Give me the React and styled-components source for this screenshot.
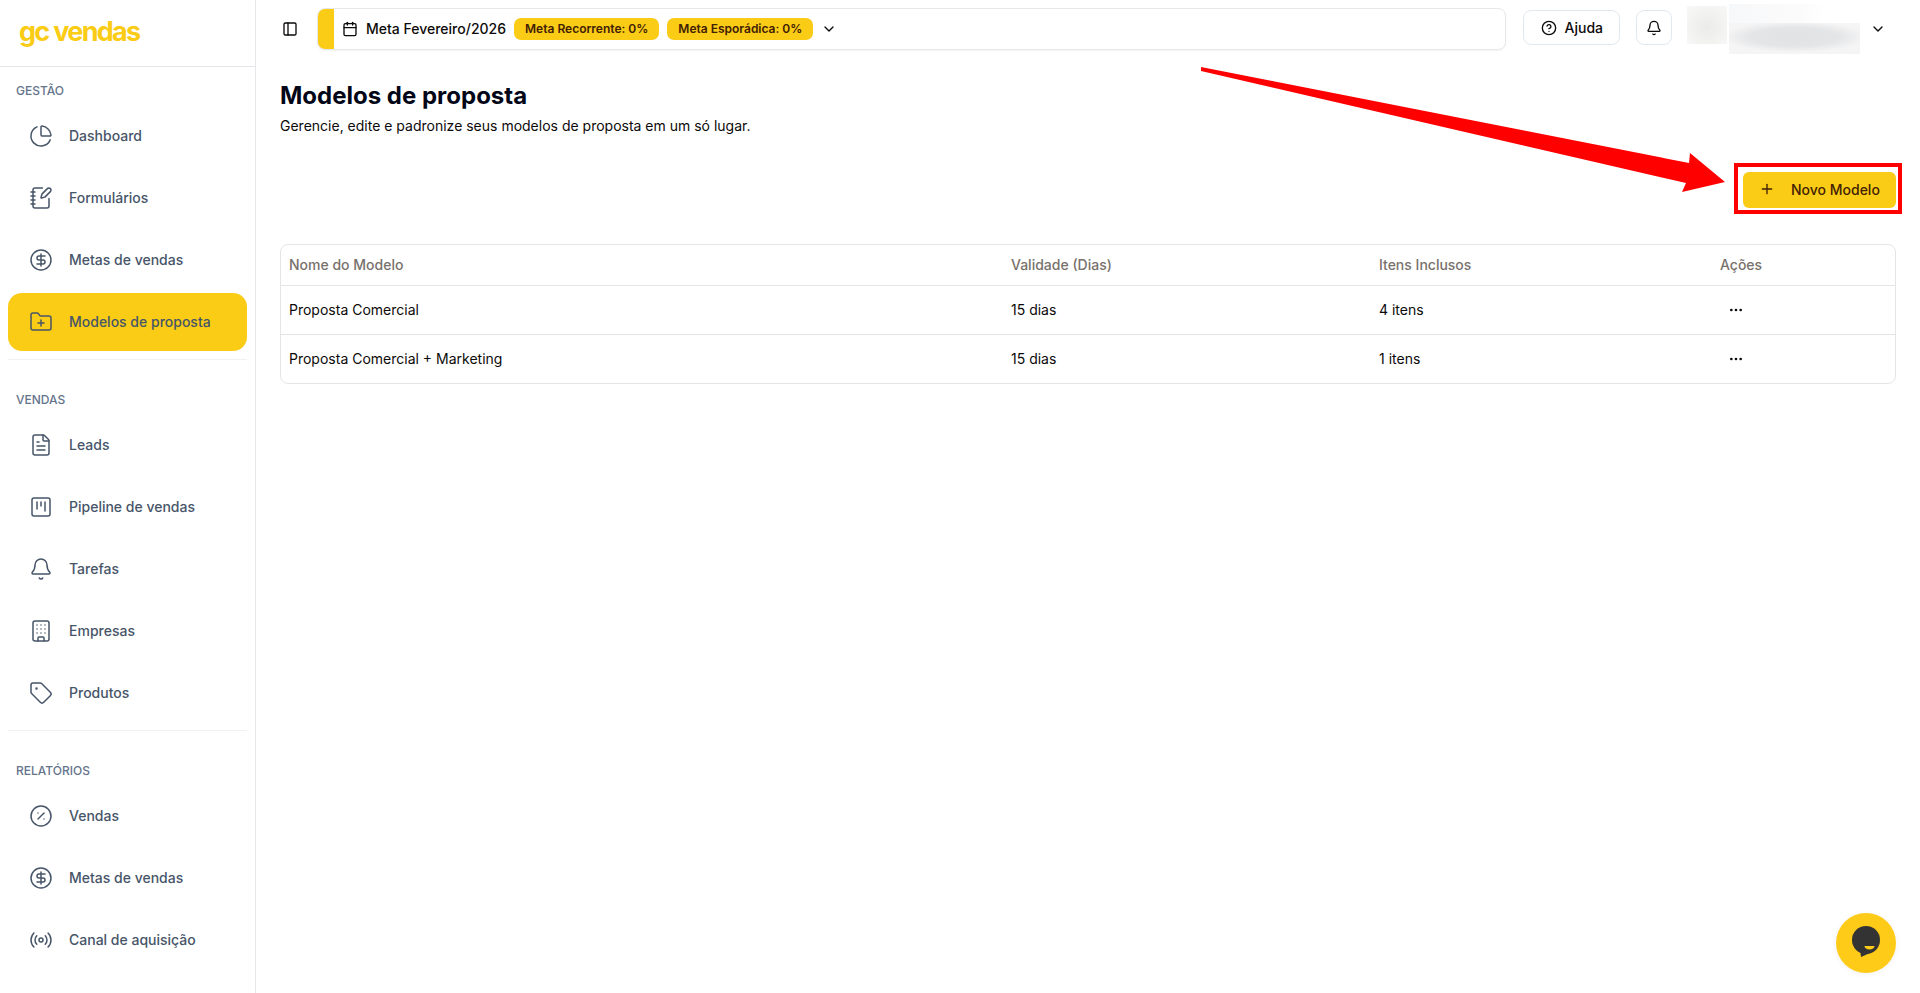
import styled, { createGlobalStyle } from 'styled-components';
import {
  Bell,
  Building,
  Calendar,
  ChartPie,
  ChevronDown,
  CircleDollarSign,
  CircleHelp,
  CirclePercent,
  Ellipsis,
  FileText,
  FolderPlus,
  NotebookPen,
  PanelLeft,
  Plus,
  Radio,
  SquareKanban,
  Tag,
} from 'lucide-react';

const GlobalStyle = createGlobalStyle`
  html, body {
    margin: 0;
    height: 100%;
    background: #fff;
    overflow: hidden;
  }
  body {
    font-family: Inter, "Liberation Sans", sans-serif;
    color: #0c0a09;
  }
`;

const Layout = styled.div`
  display: flex;
  height: 993px;
  overflow: hidden;
`;

const Sidebar = styled.aside`
  width: 256px;
  flex-shrink: 0;
  box-sizing: border-box;
  border-right: 1px solid #e5e7eb;
`;

const LogoBar = styled.div`
  height: 67px;
  box-sizing: border-box;
  display: flex;
  align-items: center;
  padding: 0 0 4px 19px;
  border-bottom: 1px solid #e5e7eb;
`;

const Logo = styled.span`
  font-size: 27px;
  font-weight: 700;
  letter-spacing: -1.7px;
  color: #facc15;
`;

const Group = styled.div`
  padding: ${props => (props.$first ? '8px' : '24px')} 8px 8px;
`;

const GroupLabel = styled.div`
  height: 32px;
  box-sizing: border-box;
  display: flex;
  align-items: center;
  padding: 0 0 2px 8px;
  font-size: 12px;
  font-weight: 500;
  color: #64748b;
`;

const GroupItems = styled.div`
  display: flex;
  flex-direction: column;
  gap: 4px;
`;

const NavItem = styled.a`
  height: 58px;
  display: flex;
  align-items: center;
  gap: 16px;
  padding-left: 21px;
  border-radius: 14px;
  font-size: 14px;
  font-weight: 500;
  color: #475569;
  background: ${props => (props.$active ? '#facc15' : 'transparent')};
  svg {
    flex-shrink: 0;
  }
`;

const NavText = styled.span`
  padding-bottom: 2px;
`;

const Divider = styled.div`
  height: 1px;
  margin: 0 8px;
  background: #f1f1f1;
`;

const Main = styled.main`
  flex: 1;
  min-width: 0;
`;

const Topbar = styled.header`
  height: 57px;
  display: flex;
  align-items: center;
  padding: 0 34px 0 20px;
`;

const ToggleButton = styled.button`
  width: 28px;
  height: 28px;
  display: flex;
  align-items: center;
  justify-content: center;
  padding: 0;
  margin-right: 13px;
  border: 0;
  background: none;
  color: #0c0a09;
`;

const GoalBar = styled.div`
  flex: 1;
  height: 42px;
  box-sizing: border-box;
  display: flex;
  align-items: center;
  gap: 8px;
  border: 1px solid #e5e7eb;
  border-radius: 8px;
  overflow: hidden;
  box-shadow: 0 1px 2px rgba(0, 0, 0, 0.05);
`;

const GoalStripe = styled.div`
  width: 16px;
  align-self: stretch;
  background: #facc15;
`;

const GoalTitle = styled.span`
  font-size: 14px;
  font-weight: 500;
`;

const GoalBadge = styled.span`
  height: 22px;
  display: flex;
  align-items: center;
  padding: 0 11px;
  border-radius: 7px;
  font-size: 12px;
  font-weight: 600;
  color: #422006;
  background: #facc15;
`;

const OutlineButton = styled.button`
  height: 35px;
  display: flex;
  align-items: center;
  justify-content: center;
  gap: 8px;
  box-sizing: border-box;
  padding: 0 ${props => (props.$square ? '0' : '16px 0 17px')};
  width: ${props => (props.$square ? '36px' : 'auto')};
  margin: 0 0 2px ${props => (props.$square ? '16px' : '17px')};
  border: 1px solid #e2e8f0;
  border-radius: 8px;
  background: #fff;
  font: 500 14px Inter, sans-serif;
  color: #0c0a09;
`;

const UserBlock = styled.div`
  height: 50px;
  display: flex;
  align-items: center;
  gap: 2px;
  margin-left: 15px;
  margin-right: 10px;
`;

const AvatarBlur = styled.div`
  width: 40px;
  height: 38px;
  margin-top: -8px;
  background: radial-gradient(circle at 50% 55%, #ebebe9 0%, #f3f3f2 60%, #f8f8f8 100%);
`;

const UserLines = styled.div`
  display: flex;
  flex-direction: column;
`;

const NameBlur = styled.div`
  width: 96px;
  height: 19px;
  background: linear-gradient(90deg, #f7f8f9, #fbfbfc 70%, #fff);
`;

const MailBlur = styled.div`
  width: 131px;
  height: 31px;
  background: radial-gradient(ellipse 55% 50% at 50% 45%, #e1e2e4 0%, #e4e5e6 60%, #f5f5f6 100%);
`;

const Page = styled.section`
  padding: 23px 24px 0;
`;

const Title = styled.h1`
  margin: 0;
  font-size: 24px;
  line-height: 32px;
  font-weight: 700;
  color: #020617;
`;

const Subtitle = styled.p`
  margin: 4px 0 0;
  font-size: 14px;
  line-height: 20px;
`;

const Actions = styled.div`
  display: flex;
  justify-content: flex-end;
  margin: 36px 0 36px;
`;

// red annotation frame from the screenshot, sits over the button
const Marked = styled.div`
  position: relative;
  &::after {
    content: '';
    position: absolute;
    inset: -9px -6px -6px -9px;
    border: 4px solid #f00;
    pointer-events: none;
  }
`;

const PrimaryButton = styled.button`
  width: 153px;
  height: 36px;
  display: flex;
  align-items: center;
  gap: 16px;
  box-sizing: border-box;
  padding: 0 16px 2px;
  border: 0;
  border-radius: 6px;
  background: #facc15;
  font: 500 14px Inter, sans-serif;
  color: #422006;
`;

const TableWrap = styled.div`
  border: 1px solid #e7e5e4;
  border-radius: 8px;
  overflow: hidden;
`;

const Table = styled.table`
  width: 100%;
  table-layout: fixed;
  border-collapse: collapse;
  font-size: 14px;
`;

const HeadCell = styled.th`
  width: ${props => props.$width};
  height: 40px;
  padding: 0 8px;
  box-sizing: border-box;
  text-align: left;
  font-weight: 500;
  color: #78716c;
  border-bottom: 1px solid #e7e5e4;
`;

const Row = styled.tr`
  &:not(:last-child) td {
    border-bottom: 1px solid #e7e5e4;
  }
`;

const Cell = styled.td`
  height: 49px;
  padding: 0 8px;
  box-sizing: border-box;
`;

const RowMenu = styled.button`
  width: 32px;
  height: 32px;
  display: flex;
  align-items: center;
  justify-content: center;
  padding: 0;
  border: 0;
  background: none;
  color: #0c0a09;
`;

const Arrow = styled.svg`
  position: fixed;
  left: 0;
  top: 0;
  pointer-events: none;
`;

const ChatBubble = styled.button`
  position: fixed;
  right: 24px;
  bottom: 20px;
  width: 60px;
  height: 60px;
  padding: 0;
  border: 0;
  border-radius: 50%;
  background: #fecb18;
  box-shadow: 0 1px 6px rgba(0, 0, 0, 0.06);
  display: flex;
  align-items: center;
  justify-content: center;
`;

const navGroups = [
  {
    label: 'GESTÃO',
    items: [
      { icon: ChartPie, text: 'Dashboard' },
      { icon: NotebookPen, text: 'Formulários' },
      { icon: CircleDollarSign, text: 'Metas de vendas' },
      { icon: FolderPlus, text: 'Modelos de proposta', active: true },
    ],
  },
  {
    label: 'VENDAS',
    items: [
      { icon: FileText, text: 'Leads' },
      { icon: SquareKanban, text: 'Pipeline de vendas' },
      { icon: Bell, text: 'Tarefas' },
      { icon: Building, text: 'Empresas' },
      { icon: Tag, text: 'Produtos' },
    ],
  },
  {
    label: 'RELATÓRIOS',
    items: [
      { icon: CirclePercent, text: 'Vendas' },
      { icon: CircleDollarSign, text: 'Metas de vendas' },
      { icon: Radio, text: 'Canal de aquisição' },
    ],
  },
];

const models = [
  { name: 'Proposta Comercial', days: '15 dias', items: '4 itens' },
  { name: 'Proposta Comercial + Marketing', days: '15 dias', items: '1 itens' },
];

const App = () => (
  <>
    <GlobalStyle />
    <Layout>
      <Sidebar>
        <LogoBar>
          <Logo>gc vendas</Logo>
        </LogoBar>
        {navGroups.map((group, i) => (
          <div key={group.label}>
            {i > 0 && <Divider />}
            <Group $first={i === 0}>
              <GroupLabel>{group.label}</GroupLabel>
              <GroupItems>
                {group.items.map(({ icon: Icon, text, active }) => (
                  <NavItem key={text} $active={active}>
                    <Icon size={24} strokeWidth={1.5} />
                    <NavText>{text}</NavText>
                  </NavItem>
                ))}
              </GroupItems>
            </Group>
          </div>
        ))}
      </Sidebar>
      <Main>
        <Topbar>
          <ToggleButton>
            <PanelLeft size={16} />
          </ToggleButton>
          <GoalBar>
            <GoalStripe />
            <Calendar size={16} />
            <GoalTitle>Meta Fevereiro/2026</GoalTitle>
            <GoalBadge>Meta Recorrente: 0%</GoalBadge>
            <GoalBadge>Meta Esporádica: 0%</GoalBadge>
            <ChevronDown size={16} />
          </GoalBar>
          <OutlineButton>
            <CircleHelp size={16} />
            Ajuda
          </OutlineButton>
          <OutlineButton $square>
            <Bell size={16} />
          </OutlineButton>
          <UserBlock>
            <AvatarBlur />
            <UserLines>
              <NameBlur />
              <MailBlur />
            </UserLines>
          </UserBlock>
          <ChevronDown size={16} />
        </Topbar>
        <Page>
          <Title>Modelos de proposta</Title>
          <Subtitle>Gerencie, edite e padronize seus modelos de proposta em um só lugar.</Subtitle>
          <Actions>
            <Marked>
              <PrimaryButton>
                <Plus size={16} />
                Novo Modelo
              </PrimaryButton>
            </Marked>
          </Actions>
          <TableWrap>
            <Table>
              <thead>
                <tr>
                  <HeadCell $width="722px">Nome do Modelo</HeadCell>
                  <HeadCell $width="368px">Validade (Dias)</HeadCell>
                  <HeadCell $width="341px">Itens Inclusos</HeadCell>
                  <HeadCell $width="183px">Ações</HeadCell>
                </tr>
              </thead>
              <tbody>
                {models.map(model => (
                  <Row key={model.name}>
                    <Cell>{model.name}</Cell>
                    <Cell>{model.days}</Cell>
                    <Cell>{model.items}</Cell>
                    <Cell>
                      <RowMenu>
                        <Ellipsis size={16} />
                      </RowMenu>
                    </Cell>
                  </Row>
                ))}
              </tbody>
            </Table>
          </TableWrap>
        </Page>
      </Main>
    </Layout>
    <Arrow width="1920" height="993" viewBox="0 0 1920 993">
      <polygon points="1201,67 1689,163 1690,153 1725,182 1682,192 1686,183 1201,71" fill="#f00" />
    </Arrow>
    <ChatBubble>
      <svg width="32" height="36" viewBox="0 0 32 36">
        <circle cx="16" cy="15" r="14" fill="#333" />
        <path d="M11 32 L10 24 L20 28 Z" fill="#333" />
        <path d="M14.5 21 h10 a5 3.6 0 0 1 -10 0 Z" fill="#fecb18" />
      </svg>
    </ChatBubble>
  </>
);

export default App;
